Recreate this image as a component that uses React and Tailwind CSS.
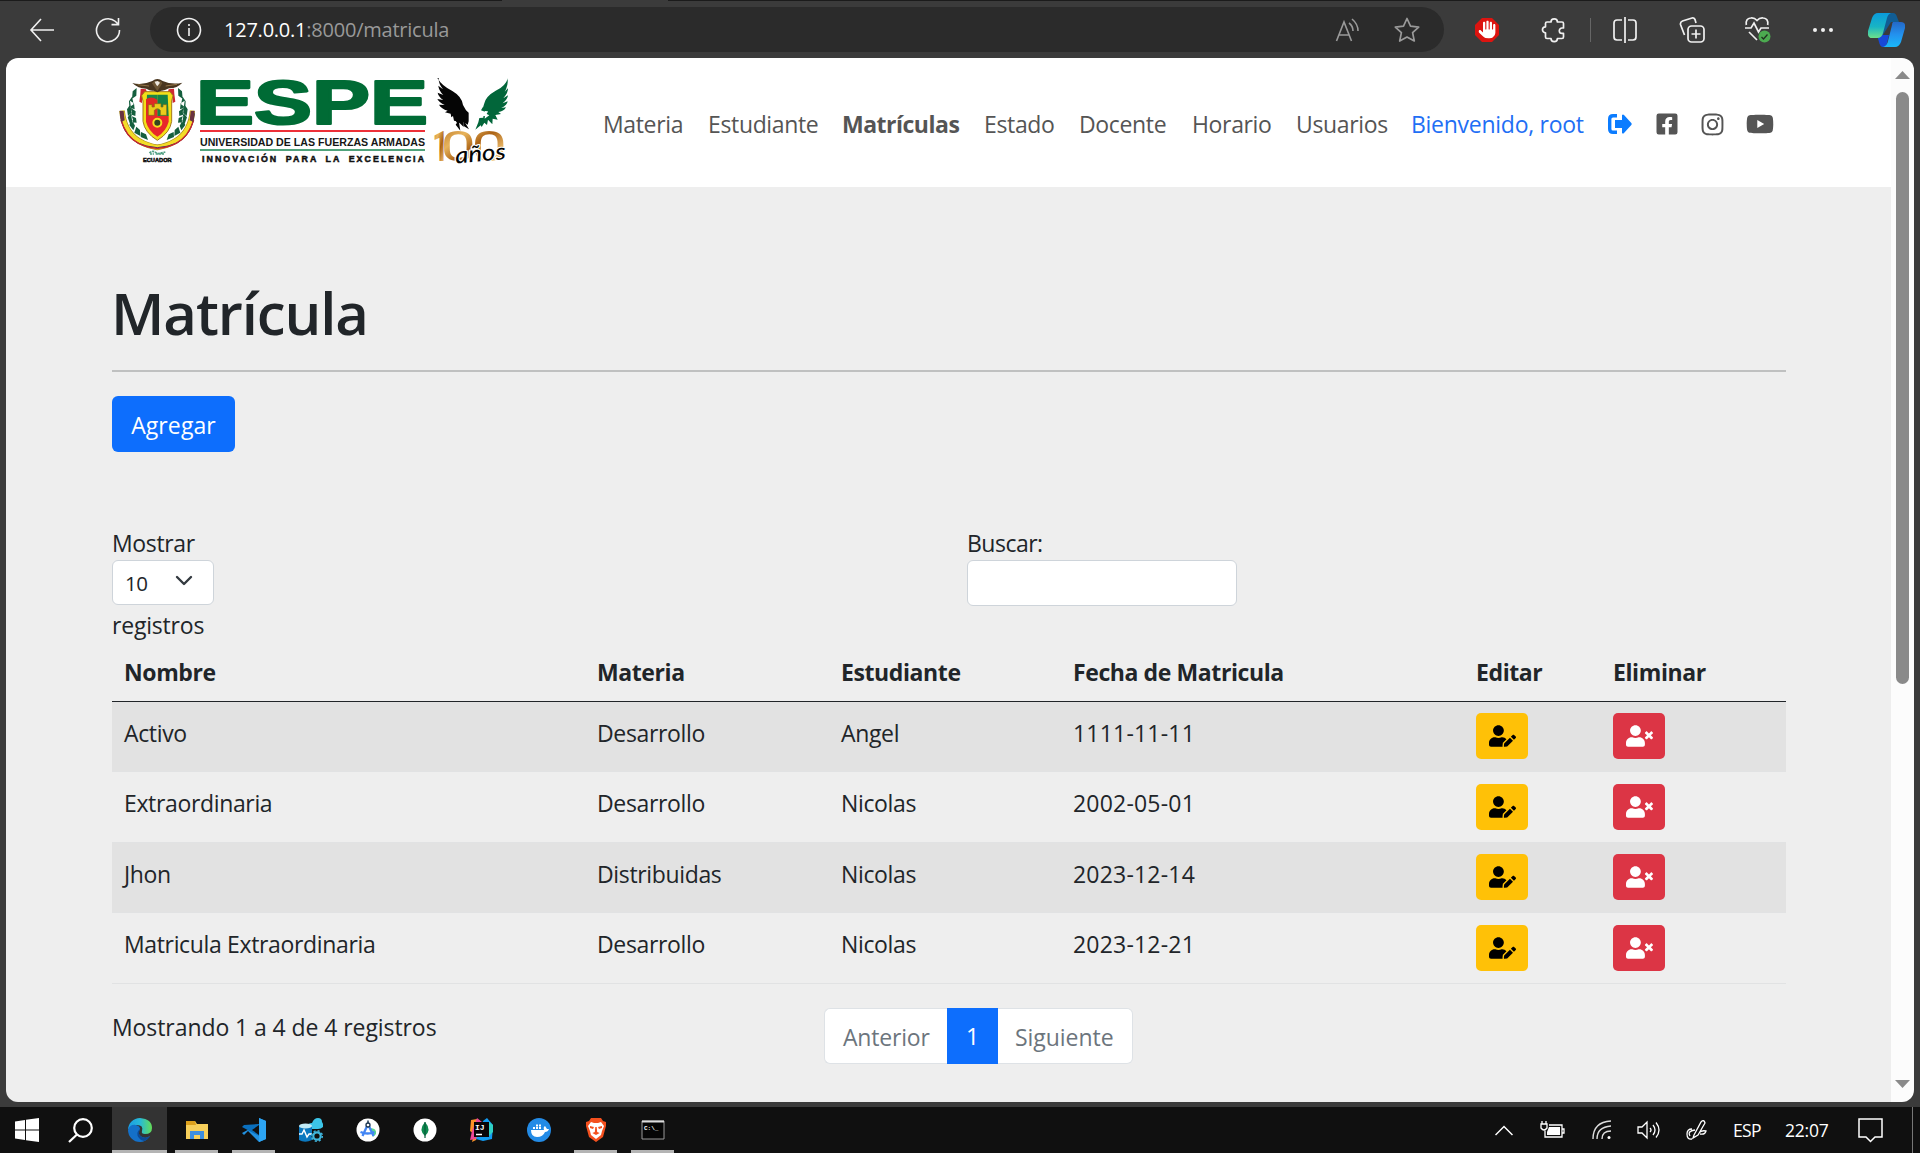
import React from "react";
import { FaUserEdit, FaUserTimes, FaFacebookSquare, FaInstagram, FaYoutube } from "react-icons/fa";
import { FaHand } from "react-icons/fa6";

const rows = [
  ["Activo", "Desarrollo", "Angel", "1111-11-11"],
  ["Extraordinaria", "Desarrollo", "Nicolas", "2002-05-01"],
  ["Jhon", "Distribuidas", "Nicolas", "2023-12-14"],
  ["Matricula Extraordinaria", "Desarrollo", "Nicolas", "2023-12-21"],
];

function AddressBar() {
  return (
    <div className="h-[58px] shrink-0 bg-[#3b3b3b] flex flex-col">
      <div className="h-[3px] flex justify-between">
        <div className="w-[502px] h-px bg-[#1b1b1b]" />
        <div className="w-[1252px] h-px bg-[#1b1b1b]" />
      </div>
      <div className="flex items-center h-[53px] pl-[29px] pr-[15px]">
        <svg className="w-[26px] h-[26px]" viewBox="0 0 26 26" fill="none" stroke="#f0f0f0" strokeWidth="1.6"><path d="M25 13H2M12 2 2 13l10 11" /></svg>
        <svg className="w-[26px] h-[26px] ml-[40px]" viewBox="0 0 26 26" fill="none" stroke="#f0f0f0" strokeWidth="1.6"><path d="M24.500 13A11.500 11.500 0 1 1 20.500 4.500L23 7M23.500 1v6.600h-7" /></svg>
        <div className="ml-[29px] w-[1294px] h-[45px] rounded-full bg-[#2b2b2b] flex items-center pl-[26px] pr-[24px]">
          <svg className="w-[26px] h-[26px]" viewBox="0 0 26 26" fill="none" stroke="#f0f0f0" strokeWidth="1.6"><circle cx="13" cy="13" r="11.500" /><path d="M13 11v8M13 7v2" /></svg>
          <div className="ml-[22px] text-[20px] tracking-[-0.23px] text-[#999] whitespace-nowrap"><span className="text-white">127.0.0.1</span>:8000/matricula</div>
          <svg className="w-[26px] h-[24px] ml-auto" viewBox="0 0 26 24" fill="none" stroke="#9a9a9a" strokeWidth="1.6"><path d="M1.500 23 9 4l7.500 19M4 17h10M14 5q4 3 4 8M17 1q6 5 6 12" /></svg>
          <svg className="w-[26px] h-[26px] ml-[33px]" viewBox="0 0 26 26" fill="none" stroke="#9a9a9a" strokeWidth="1.7" strokeLinejoin="round"><path d="m13 1.500 3.500 7.600 8.200 1-6.100 5.600 1.700 8.300L13 20l-7.300 4 1.700-8.300L1.300 10.100l8.200-1z" /></svg>
        </div>
        <svg className="w-[26px] h-[26px] ml-[30px]" viewBox="0 0 26 26"><path d="M8 1h10l7 7v10l-7 7H8l-7-7V8z" fill="#dc1410" /><g transform="translate(4.500 3.500)"><FaHand size={18} color="#fff" /></g></svg>
        <svg className="w-[26px] h-[26px] ml-[41px]" viewBox="0 0 26 26" fill="none" stroke="#f0f0f0" strokeWidth="1.7" strokeLinejoin="round"><path d="M6 5h4a3.200 3.200 0 0 1 6.400 0H21q1.500 0 1.500 1.500V11H21a2.700 2.700 0 0 0 0 5.400h1.500V20q0 1.500-1.500 1.500h-4.600a3.200 3.200 0 0 1-6.400 0H6Q4.500 21.500 4.500 20v-4.200a3 3 0 0 1 0-6V6.500Q4.500 5 6 5z" /></svg>
        <div className="w-px h-[24px] bg-[#666] ml-[23px]" />
        <svg className="w-[26px] h-[26px] ml-[21px]" viewBox="0 0 26 26" fill="none" stroke="#f0f0f0" strokeWidth="1.7"><path d="M10 3H5Q2 3 2 6v14q0 3 3 3h5M16 3h5q3 0 3 3v14q0 3-3 3h-5M13 0v26" /></svg>
        <svg className="w-[26px] h-[26px] ml-[41px]" viewBox="0 0 26 26" fill="none" stroke="#f0f0f0" strokeWidth="1.7"><rect x="9" y="9" width="16" height="16" rx="3.500" /><path d="M17 12.500v9M12.500 17h9M5.500 18 1.500 7.500Q1 5 3.500 4L13 1q2-.5 3 1.500L17 6" /></svg>
        <svg className="w-[27px] h-[27px] ml-[39px]" viewBox="0 0 27 27" fill="none" stroke="#f0f0f0" strokeWidth="1.7"><path d="M2.300 9q-1-6.500 4.500-7 3.500-.5 6.200 2.500Q15.700 1.500 19.200 2q5.500.5 4.500 7M1 12h6l3-5 4.500 9 2.500-4h8M5 16l8 8" /><circle cx="20.500" cy="20.500" r="6" fill="#4caa50" stroke="none" /><path d="m17.500 21 2 2 4-4.500" stroke="#203020" strokeWidth="1.300" /></svg>
        <svg className="w-[22px] h-[6px] ml-[41px]" viewBox="0 0 22 6" fill="#f0f0f0"><circle cx="3" cy="3" r="2" /><circle cx="11" cy="3" r="2" /><circle cx="19" cy="3" r="2" /></svg>
        <svg className="w-[37px] h-[34px] ml-auto shrink-0" viewBox="0 0 37 34">
          <defs>
            <linearGradient id="cpA" x1="0" y1="0" x2="0" y2="1"><stop offset="0" stopColor="#0a9bdc" /><stop offset=".55" stopColor="#18b4c4" /><stop offset="1" stopColor="#6de08a" /></linearGradient>
            <linearGradient id="cpB" x1="0" y1="0" x2="0" y2="1"><stop offset="0" stopColor="#2468c8" /><stop offset=".5" stopColor="#2391ee" /><stop offset="1" stopColor="#1ab8fa" /></linearGradient>
          </defs>
          <path d="M14 0h11q3 0 4 4l2 5h-8L13 25h-4z" fill="#115d94" />
          <path d="M9 22h12l-3 12h-3q-3 0-4-5z" fill="#1748d8" />
          <path d="M10 0h13q-3 1-4 5l-4 15q-1 5-6 5H4q-5 0-4-7L4 5q2-5 6-5z" fill="url(#cpA)" />
          <path d="M25 9h8q5 0 4 6l-4 14q-2 5-6 5H15q4-1 5-6l4-16q0-2 1-3z" fill="url(#cpB)" />
        </svg>
      </div>
    </div>
  );
}

function Emblem() {
  return (
    <svg className="w-[76px] h-[88px] shrink-0" viewBox="27 24 228 264">
      <g fill="none">
        <path d="M36 122q6 62 50 90 26 16 56 20 30-4 56-20 44-28 50-90" stroke="#a88a1a" strokeWidth="17" />
        <path d="M36 122q6 62 50 90 26 16 56 20 30-4 56-20 44-28 50-90" stroke="#f4dc28" strokeWidth="13" />
        <path d="M31 130q5 62 50 88 28 13 61 15 33-2 61-15 45-26 50-88" stroke="#2d3570" strokeWidth="3" />
        <path d="M33 150q14 50 54 71 24 12 55 14 31-2 55-14 40-21 54-71" stroke="#c6272e" strokeWidth="4" />
      </g>
      <path d="m29 122 12 1 3 28-11 5zM254 122l-12 1-3 28 11 5z" fill="#6a3340" />
      <g fill="#155f3e">
        <path d="m80 54-12 10-2 22 13-9zM66 80l-9 14 1 18 13-9zM60 104l-9 14 3 20 12-11zM63 130l-10 12 7 20 9-12zM66 151l-8 14 12 16 5-14zM79 170l-6 18 18 10-1-18zM93 186l-1 15 22 9-6-17zM60 92l12 8 2 18-11-4zM63 114l14 10-1 14-11-4zM64 138l14 6 2 14-13-1z" />
        <path d="m204 54 12 10 2 22-13-9zM218 80l9 14-1 18-13-9zM224 104l9 14-3 20-12-11zM221 130l10 12-7 20-9-12zM218 151l8 14-12 16-5-14zM205 170l6 18-18 10 1-18zM191 186l1 15-22 9 6-17zM224 92l-12 8-2 18 11-4zM221 114l-14 10 1 14 11-4zM220 138l-14 6-2 14 13-1z" />
      </g>
      <path d="m92 56 16 2 3 10-14 12-1 19-8-4 3-23zM192 56l-16 2-3 10 14 12 1 19 8-4-3-23z" fill="#cf2930" />
      <path d="M104 65h76l9 12-4 16v61q-5 34-43 57-38-23-43-57V93l-4-16z" fill="#f3df19" stroke="#a57819" strokeWidth="3" />
      <path d="M111 74h31v64h-34z" fill="#1a8649" /><path d="M142 74h31l3 64h-34z" fill="#168046" /><path d="M108 88q15-12 34 1v49h-34z" fill="#e02a25" />
      <path d="M108 138h68v17q-8 29-34 45-26-16-34-45z" fill="#e8272b" />
      <path d="M115 104h11v7h7v-10h20v10h6v-7h11v32h-19v-15q-9-10-18 0v15h-18z" fill="#eacb1b" stroke="#846818" strokeWidth="2" />
      <circle cx="142" cy="158" r="12" fill="#34451f" stroke="#f5db20" strokeWidth="6" />
      <path d="M67 39q29 8 60-6 15-12 31 0 28 12 59 5-17 18-40 17-15 8-23 7l-12 5-11-5q-10 2-22-6-25 0-42-17z" fill="#49361f" />
      <path d="m126 40 16 24 15-24-5-7h-18z" fill="#6e5634" /><path d="m134 35 9-2 7 5-8 11-5-7z" fill="#eee9df" /><path d="m83 44 34 4M201 43l-34 5" stroke="#937446" strokeWidth="3" />
      <path d="M118 249q10-9 20-1l7 3 21-5M120 252h12M137 252h27" fill="none" stroke="#52a184" strokeWidth="5" strokeDasharray="7 2" />
      <text x="142" y="276" textAnchor="middle" textLength="86" lengthAdjust="spacingAndGlyphs" fontFamily="Liberation Sans" fontWeight="bold" fontSize="17" fill="#111" stroke="#111" strokeWidth="1.500">ECUADOR</text>
    </svg>
  );
}

function Logo() {
  return (
    <div className="flex items-start w-[393px] h-[92px] shrink-0">
      <Emblem />
      <svg className="w-[226px] h-[88px] ml-[5px] shrink-0 overflow-visible" viewBox="0 0 226 88">
        <text x="-4" y="45.500" textLength="232" lengthAdjust="spacingAndGlyphs" fontFamily="Liberation Sans" fontWeight="bold" fontSize="63" fill="#006b35" stroke="#006b35" strokeWidth="2.200" strokeLinejoin="round">ESPE</text>
        <path d="M0 53h225" stroke="#ed3038" strokeWidth="2" />
        <path d="M0 72h225" stroke="#16844f" strokeWidth="1.500" />
        <text x="0" y="67.500" textLength="225" lengthAdjust="spacingAndGlyphs" fontFamily="Liberation Sans" fontWeight="bold" fontSize="11.500" fill="#161616">UNIVERSIDAD DE LAS FUERZAS ARMADAS</text>
        <text x="2" y="84" textLength="222" fontFamily="Liberation Sans" fontWeight="bold" fontSize="8.800" wordSpacing="3" fill="#111" stroke="#111" strokeWidth=".5">INNOVACIÓN PARA LA EXCELENCIA</text>
      </svg>
      <svg className="w-[76px] h-[92px] ml-[9px] shrink-0 overflow-visible" viewBox="30 24 228 276">
        <defs><linearGradient id="gold" x1="0" y1="0" x2="1" y2="1"><stop offset="0" stopColor="#b0681a" /><stop offset=".3" stopColor="#e8b45c" /><stop offset=".5" stopColor="#ab6214" /><stop offset=".75" stopColor="#efc070" /><stop offset="1" stopColor="#b87320" /></linearGradient></defs>
        <path d="M37 24q13 23 45 39 29 17 32 42l9 16 8 7v26l-3 10-13-9 1 16-13-13-3 6-8-11-5-1-3-14-5 4-2-11-17-4 8-5q-19-6-26-18l17 1q-16-7-22-18l18 3q-15-10-17-22l17 7q-14-14-15-28l14 11q-14-17-13-34z" fill="#050505" />
        <path d="M114 147l18 31-16-10zM101 151l5 31-14-18z" fill="#050505" />
        <path d="M249 24q-8 26-37 38-30 17-34 38-4 14-7 20l17 7-14 7 1 9-12 1-3 13-9 22 16-13 3 5 8-13 8 7 3-16 13 14 1-17 15 3-7-14 17-3-8-6q16-1 23-14l-14 2q18-9 19-20l-15 6q15-12 16-24l-14 9q15-17 14-30l-10 10q11-18 9-37z" fill="#02663a" />
        <path d="m177 123 12 1-4 8 8 4-14 10 1-8-13 2z" fill="#fff" />
        <path d="m174 111-6 10 12 4z" fill="#02663a" />
        <text transform="scale(.68 1)" x="32" y="274" fontFamily="Roboto" fontWeight="700" fontSize="128" fill="url(#gold)">1</text>
        <text transform="scale(1.5 1)" x="31 93" y="273" fontFamily="Roboto" fontSize="126" fill="url(#gold)">00</text>
        <text transform="rotate(-5 95 277)" x="92" y="280" textLength="152" lengthAdjust="spacingAndGlyphs" fontFamily="Lato" fontStyle="italic" fontWeight="500" fontSize="68" fill="#050505" stroke="#fff" strokeWidth="7" paintOrder="stroke" strokeLinejoin="round">años</text>
      </svg>
    </div>
  );
}

function NavBar() {
  return (
    <header className="h-[129px] bg-white shrink-0 flex items-start pl-[113px] pt-[20px]">
      <Logo />
      <nav className="flex items-center h-[36px] mt-[28px] ml-[91px] text-[23px] text-[#555] whitespace-nowrap tracking-[-0.35px]">
        <span className="w-[105px]">Materia</span>
        <span className="w-[134px]">Estudiante</span>
        <span className="w-[142px] font-bold tracking-[-0.5px]">Matrículas</span>
        <span className="w-[95px]">Estado</span>
        <span className="w-[113px]">Docente</span>
        <span className="w-[104px]">Horario</span>
        <span className="w-[115px]">Usuarios</span>
        <span className="w-[197px] text-[#1f6ff5] tracking-[-0.27px]">Bienvenido, root</span>
        <svg className="w-[24px] h-[20px]" viewBox="0 0 24 20"><path d="M9 1.700H5Q1.700 1.700 1.700 5v10q0 3.300 3.300 3.300h4" fill="none" stroke="#0b7cff" strokeWidth="3.400" /><path d="M7 6h7V1q1-1 2 0l7.300 8q.8 1 0 2L16 19q-1 1-2 0v-5H7z" fill="#0b7cff" /></svg>
        <FaFacebookSquare className="ml-[23px] w-[24px] h-[24px]" />
        <FaInstagram className="ml-[21px] w-[25px] h-[25px]" />
        <FaYoutube className="ml-[21px] w-[28px] h-[28px]" />
      </nav>
    </header>
  );
}

function Table() {
  return (
    <table className="w-[1674px] table-fixed border-collapse text-left">
      <colgroup><col className="w-[473px]" /><col className="w-[244px]" /><col className="w-[232px]" /><col className="w-[403px]" /><col className="w-[137px]" /><col /></colgroup>
      <thead>
        <tr className="h-[57px] border-b border-[#212529]">
          {["Nombre", "Materia", "Estudiante", "Fecha de Matricula", "Editar", "Eliminar"].map((h) => (
            <th key={h} className="pl-[12px] font-bold tracking-[-0.4px] pb-[1px]">{h}</th>
          ))}
        </tr>
      </thead>
      <tbody>
        {rows.map((r, i) => (
          <tr key={i} className="h-[70.5px] border-b border-[#e1e2e3] odd:bg-[#e2e2e2]">
            {r.map((c, j) => <td key={j} className={j === 3 ? "pl-[12px] pb-[7px] tracking-[0.2px]" : "pl-[12px] pb-[7px] tracking-[-0.35px]"}>{c}</td>)}
            <td className="pl-[12px]"><div className="w-[52px] h-[46px] rounded-[5px] bg-[#ffc107] flex items-center justify-center"><FaUserEdit className="w-[27px] h-[22px] text-black" /></div></td>
            <td className="pl-[12px]"><div className="w-[52px] h-[46px] rounded-[5px] bg-[#dc3545] flex items-center justify-center"><FaUserTimes className="w-[27px] h-[22px] text-white" /></div></td>
          </tr>
        ))}
      </tbody>
    </table>
  );
}

function Content() {
  return (
    <main className="flex-1 bg-[#eee] pl-[106px] text-[23px] leading-[36px] tracking-[-0.35px] text-[#212529] overflow-hidden">
      <h1 className="pt-[90px] h-[183px] -ml-px text-[58px] leading-[72px] font-semibold tracking-[-1.1px]">Matrícula</h1>
      <div className="w-[1674px] h-[2px] bg-[#bfc0c0]" />
      <button className="block mt-[24px] w-[123px] h-[56px] rounded-[6px] bg-[#0d6efd] text-white pt-[2px] tracking-[0.1px]">Agregar</button>
      <div className="flex mt-[73px] h-[119px]">
        <div className="w-[855px]">
          <div className="h-[35px]">Mostrar</div>
          <div className="w-[102px] h-[45px] border border-[#ced4da] rounded-[6px] bg-white flex items-center pl-[12px] text-[20.500px]">10
            <svg className="ml-[27px] mb-[3px] w-[18px] h-[12px]" viewBox="0 0 18 12" fill="none" stroke="#343a40" strokeWidth="2.400" strokeLinecap="round" strokeLinejoin="round"><path d="m2 2 7 7 7-7" /></svg>
          </div>
          <div className="mt-[2px] tracking-[-0.2px]">registros</div>
        </div>
        <div>
          <div className="h-[35px] tracking-[-0.5px]">Buscar:</div>
          <div className="w-[270px] h-[46px] border border-[#ced4da] rounded-[6px] bg-white" />
        </div>
      </div>
      <Table />
      <div className="flex">
        <div className="w-[712px] mt-[25px] tracking-[-0.08px]">Mostrando 1 a 4 de 4 registros</div>
        <div className="flex mt-[24px] h-[56px] text-[#6c757d] leading-[57px]">
          <div className="w-[123px] pl-[18px] border border-r-0 border-[#dee2e6] rounded-l-[6px] bg-white tracking-[-0.2px]">Anterior</div>
          <div className="w-[51px] text-center bg-[#0d6efd] text-white">1</div>
          <div className="w-[135px] pl-[17px] border border-l-0 border-[#dee2e6] rounded-r-[6px] bg-white tracking-[-0.05px]">Siguiente</div>
        </div>
      </div>
    </main>
  );
}

function ScrollBar() {
  return (
    <div className="w-[23px] bg-[#fcfcfc] flex flex-col items-center shrink-0">
      <svg className="w-[15px] h-[8px] mt-[13px]" viewBox="0 0 15 8"><path d="M7.500 0 15 8H0z" fill="#8a8a8a" /></svg>
      <div className="mt-[13px] w-[13px] h-[592px] rounded-full bg-[#8a8a8a]" />
      <svg className="w-[15px] h-[8px] mt-auto mb-[14px]" viewBox="0 0 15 8"><path d="M7.500 8 15 0H0z" fill="#8a8a8a" /></svg>
    </div>
  );
}

function TaskButton({ children, open, active }) {
  return (
    <div className={active ? "w-[55px] mx-px h-full bg-[#333] flex flex-col items-center" : "w-[57px] h-full flex flex-col items-center"}>
      <svg className="w-[24px] h-[24px] mt-[11px]" viewBox="0 0 24 24">{children}</svg>
      {open && <div className={active ? "mt-auto w-full h-[3px] bg-[#b4b4b4]" : "mt-auto w-[43px] h-[3px] bg-[#b4b4b4]"} />}
    </div>
  );
}

function TaskBar() {
  return (
    <footer className="h-[46px] bg-[#101010] flex items-center text-white shrink-0 overflow-hidden">
      <svg className="w-[24px] h-[24px] ml-[15px]" viewBox="0 0 24 24" fill="#fff"><path d="M0 3.500 10 2v9.400H0zM11 1.800 24 0v11.400H11zM0 12.500h10V22L0 20.500zM11 12.500h13V24l-13-1.800z" /></svg>
      <svg className="w-[25px] h-[25px] ml-[29px] mr-[19px]" viewBox="0 0 25 25" fill="none" stroke="#fff" strokeWidth="2.200"><circle cx="15" cy="10" r="8.800" /><path d="m9 16.500-8 7.500" /></svg>
      <div className="flex h-full -ml-px">
        <TaskButton open active>
          <defs><linearGradient id="eg" x1="0" y1="0" x2="1" y2="0"><stop offset="0" stopColor="#1b9de2" /><stop offset=".5" stopColor="#27b9d8" /><stop offset="1" stopColor="#64dd56" /></linearGradient></defs>
          <path d="M0 12A12 12 0 0 1 12 0q12 1 12 10 0 6-7 6-4 0-3-3 2-7-7-6Q1 9 0 12z" fill="url(#eg)" />
          <path d="M0 12q2-6 8-5 4 1 4 4-3 5 2 8 4 2 8-1-4 6-10 6A12 12 0 0 1 0 12z" fill="#1470c8" />
          <path d="M12 11q-5 4-1 9 2 3 5 3 4-1 6-5-4 3-8 1-5-3-2-8z" fill="#0c4a96" />
        </TaskButton>
        <TaskButton open>
          <path d="M1 3h9l2 3h11v15H1z" fill="#f7cf5a" /><path d="M1 3h9l1 4H1z" fill="#dda01c" /><path d="M5 21v-8h14v8h-4v-4H9v4z" fill="#3e8ede" />
        </TaskButton>
        <TaskButton open>
          <path d="m17 0 7 3v18l-7 3L6 13l-4 4-2-2 17-9z" fill="#2291e0" /><path d="M17 6v12L0 9l2-2z" fill="#0a6fbd" /><path d="M17 7v10l-7-5z" fill="#101010" /><path d="m17 0 7 3v18l-7 3z" fill="#2ca4f3" />
        </TaskButton>
        <TaskButton>
          <path d="M9 10q-1-5 4-5 2-5 6-5 4 0 4 4 2 3 1 5-2 2-5 2h-8z" fill="#3cc5e8" />
          <path d="M0 8v14q6 3.500 13 0V8z" fill="#0b78bf" /><ellipse cx="6.500" cy="8" rx="6.500" ry="2.600" fill="#c1ebf7" /><path d="M0 16h3l2-4 3 7 2-3h3" fill="none" stroke="#fff" strokeWidth="1.400" />
          <circle cx="18" cy="18" r="5.500" fill="#101010" /><circle cx="18" cy="18" r="3.700" fill="none" stroke="#3fb5dc" strokeWidth="2.200" /><circle cx="18" cy="18" r="5.300" fill="none" stroke="#3fb5dc" strokeWidth="1.500" strokeDasharray="2.100 2.060" />
        </TaskButton>
        <TaskButton>
          <circle cx="12" cy="12" r="11.500" fill="#fff" /><path d="M14 10q7 0 6 6l-3 3z" fill="#57d68f" /><path d="m12 6-5.500 12M12 6l5.500 12M4.500 14q7 3 14 0" fill="none" stroke="#4285f4" strokeWidth="2.300" /><circle cx="12" cy="7" r="2" fill="#fff" stroke="#1d3650" strokeWidth="1.300" /><path d="M12 2.500v3" stroke="#1d3650" strokeWidth="1.500" />
        </TaskButton>
        <TaskButton>
          <circle cx="12" cy="12" r="11.500" fill="#fff" /><path d="M12 4q7 8 0 14-7-6 0-14z" fill="#0d8a4f" /><path d="M12 4v16" stroke="#075a3a" strokeWidth="1.200" />
        </TaskButton>
        <TaskButton>
          <path d="M1 2 7 1l7 5-8 16-4 2 2-8-4-3z" fill="#fc9228" /><path d="m7 0 5 4-6 17-6 1 2-9z" fill="#ec4795" /><path d="m13 3 4-3 6 7-1 14-9 2-7-2z" fill="#129bf3" /><path d="m19 4 4 3v7l-4 4z" fill="#2fd0c5" /><path d="M4 4h15v15H4z" fill="#080408" /><path d="M6 16.500h6" stroke="#fff" strokeWidth="1.500" /><text x="5" y="12" fontFamily="Liberation Mono" fontWeight="bold" fontSize="8" fill="#fff">IJ</text>
        </TaskButton>
        <TaskButton>
          <circle cx="12" cy="12" r="12" fill="#238be6" /><path d="M4 12h13q-1-3 1-4l2 3h2q-1 3-4 3-2 5-8 5-6 0-6-7zM6 9h2v2H6zM9 9h2v2H9zM12 9h2v2h-2zM9 6.500h2v2H9zM12 6.500h2v2h-2z" fill="#fff" />
        </TaskButton>
        <TaskButton open>
          <path d="M7 0h10l2 3 3 1v4l-3 11-7 5-7-5L2 8V4l3-1z" fill="#f4501e" /><path d="m7 4 3 1h4l3-1 3 4-2 5-1 4-5 4-5-4-1-4-2-5z" fill="#fff" /><path d="m6 8 4 1-1 2-3-1zM18 8l-4 1 1 2 3-1zM11.300 9h1.400l.5 5 2.500 1-3.700 2-3.700-2 2.500-1z" fill="#f4501e" />
        </TaskButton>
        <TaskButton open>
          <path d="M1 3h22v18H1z" fill="#050505" stroke="#999" /><path d="M1 2.500h22v2H1z" fill="#ddd" /><text x="3" y="11.500" fontFamily="Liberation Mono" fontWeight="bold" fontSize="6" fill="#fff">C:\_</text>
        </TaskButton>
      </div>
      <div className="flex items-center ml-auto h-full text-[17.500px]">
        <svg className="w-[18px] h-[11px]" viewBox="0 0 18 11" fill="none" stroke="#fff" strokeWidth="1.500"><path d="m.5 10 8.500-8.500L17.500 10" /></svg>
        <svg className="w-[25px] h-[18px] ml-[27px]" viewBox="0 0 25 18" fill="none" stroke="#fff" strokeWidth="1.300"><path d="M9 4h13v12H5V9M22 8h2v4h-2M1 3h6v4Q4 11 1 7zM2 3V0M6 3V0" /><path d="M9 6h11v8H7v-3z" fill="#fff" stroke="none" /></svg>
        <svg className="w-[19px] h-[20px] ml-[27px]" viewBox="0 0 19 20" fill="none" stroke="#ddd" strokeWidth="1.400"><path d="M1 19Q1 2 19 1M5 19Q5 7 19 6M10 19q0-8 9-8" /><circle cx="17" cy="17.500" r="1.500" fill="#fff" stroke="none" /></svg>
        <svg className="w-[23px] h-[20px] ml-[26px]" viewBox="0 0 23 20" fill="none" stroke="#fff" strokeWidth="1.300"><path d="M1 7h4l5-5v16l-5-5H1zM13 8q2 2 0 4M16 5q4 5 0 10M19 2.500q6 7.500 0 15" /></svg>
        <svg className="w-[21px] h-[21px] ml-[26px]" viewBox="0 0 21 21" fill="none" stroke="#fff" strokeWidth="1.300"><path d="M8 15 15 2q3-3 4 1l-7 12-5 3zM6 9q-5 0-5 5 0 6 5 5M4 16q-3-5 5-6M13 13q2-3 7-2-1 4-6 3" /></svg>
        <span className="ml-[26px] w-[52px] tracking-[-0.6px]">ESP</span>
        <span className="w-[73px] tracking-[-0.2px]">22:07</span>
        <svg className="w-[25px] h-[25px]" viewBox="0 0 25 25" fill="none" stroke="#fff" strokeWidth="1.500"><path d="M1 1h23v18h-7l-4.500 4.500L8 19H1z" /></svg>
        <div className="ml-[29px] mr-[7px] w-px h-full bg-[#777]" />
      </div>
    </footer>
  );
}

export default function App() {
  return (
    <div className="w-[1920px] h-[1153px] bg-[#3b3b3b] flex flex-col overflow-hidden font-['Open_Sans','Noto_Sans',sans-serif]">
      <AddressBar />
      <div className="h-[1044px] mx-[6px] mb-[5px] rounded-[12px] overflow-hidden flex shrink-0">
        <div className="w-[1885px] flex flex-col"><NavBar /><Content /></div>
        <ScrollBar />
      </div>
      <TaskBar />
    </div>
  );
}
